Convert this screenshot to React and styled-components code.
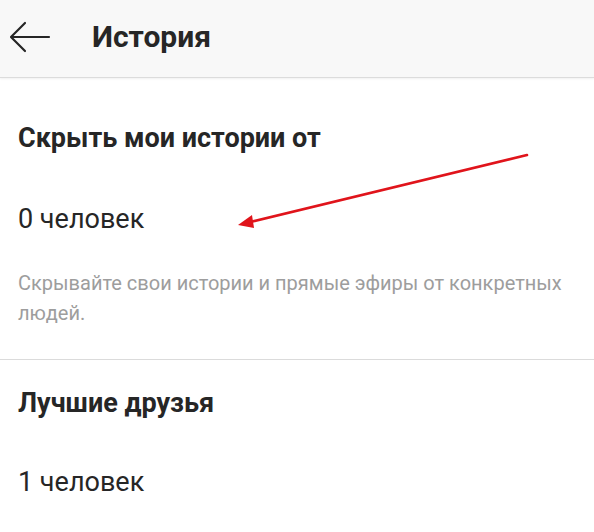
import React from "react";
import styled, { createGlobalStyle } from "styled-components";

const Global = createGlobalStyle`
  body {
    margin: 0;
    background: #fff;
    font-family: Roboto, "Noto Sans", sans-serif;
    color: #262626;
  }
`;

const App = () => {
  return (
    <Page>
      <Global />
      <Header>
        <BackButton aria-label="Назад">
          <svg width="42" height="32" viewBox="0 0 42 32" fill="none">
            <path
              d="M40 16H3M16 2L2 16l14 14"
              stroke="#262626"
              strokeWidth="2.2"
              strokeLinecap="round"
              strokeLinejoin="round"
            />
          </svg>
        </BackButton>
        <Title>История</Title>
      </Header>

      <Section top={44}>
        <Heading>Скрыть мои истории от</Heading>
        <Value>0 человек</Value>
        <Hint>
          Скрывайте свои истории и прямые эфиры от конкретных людей.
        </Hint>
      </Section>

      <Divider />

      <Section top={27}>
        <Heading>Лучшие друзья</Heading>
        <Value gap={47}>1 человек</Value>
      </Section>

      {/* red annotation arrow drawn over the screen */}
      <Annotation width="594" height="532" viewBox="0 0 594 532">
        <line x1="527" y1="155" x2="248" y2="222.5" stroke="#e0141b" strokeWidth="2.6" strokeLinecap="round" />
        <polygon points="238,225 252,215 254,228" fill="#e0141b" />
      </Annotation>
    </Page>
  );
};

//Styled Components
const Page = styled.div`
  position: relative;
  width: 594px;
  height: 532px;
  overflow: hidden;
  background: #fff;
`;

const Header = styled.div`
  height: 77px;
  display: flex;
  align-items: center;
  background: #f8f8f8;
  border-bottom: 1px solid #dcdcdc;
  box-shadow: 0 1px 2px rgba(0, 0, 0, 0.06);
`;

const BackButton = styled.div`
  width: 92px;
  padding-left: 9px;
  box-sizing: border-box;
  display: flex;
  align-items: center;
  margin-top: -3px;
`;

const Title = styled.h1`
  margin: 0;
  font-size: 30px;
  font-weight: 700;
  color: #262626;
  margin-top: -4px;
`;

const Section = styled.div`
  padding: ${(p) => p.top}px 18px 0;
`;

const Heading = styled.h2`
  margin: 0;
  font-size: 27px;
  line-height: 32px;
  font-weight: 700;
  color: #262626;
`;

const Value = styled.div`
  margin-top: ${(p) => p.gap || 49}px;
  font-size: 27px;
  line-height: 32px;
  color: #262626;
`;

const Hint = styled.p`
  margin: 33px 0 0;
  font-size: 20px;
  line-height: 30px;
  color: #9d9d9d;
  padding-right: 12px;
`;

const Divider = styled.div`
  margin-top: 31px;
  height: 1px;
  background: #dbdbdb;
`;

const Annotation = styled.svg`
  position: absolute;
  left: 0;
  top: 0;
  pointer-events: none;
`;

export default App;
